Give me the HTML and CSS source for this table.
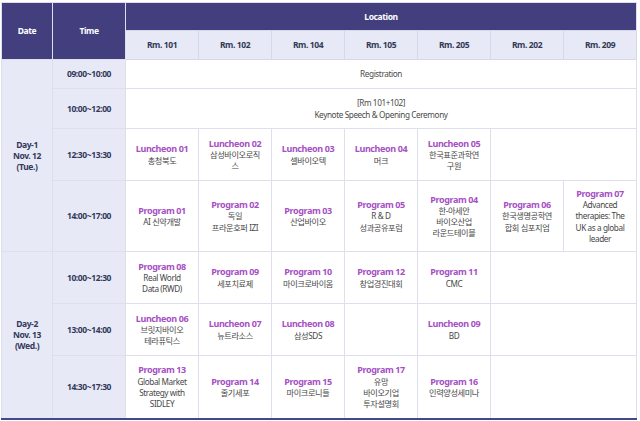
FILE: index.html
```html
<!DOCTYPE html>
<html>
<head>
<meta charset="utf-8">
<link rel="stylesheet" href="styles.css">
</head>
<body>
<table class="sched">
  <colgroup>
    <col class="c-date"><col class="c-time">
    <col class="c-rm"><col class="c-rm"><col class="c-rm"><col class="c-rm"><col class="c-rm"><col class="c-rm"><col class="c-rm">
  </colgroup>
  <thead>
    <tr class="h1">
      <th rowspan="2" class="hd">Date</th>
      <th rowspan="2" class="hd">Time</th>
      <th colspan="7" class="hd loc">Location</th>
    </tr>
    <tr class="h2">
      <th>Rm. 101</th><th>Rm. 102</th><th>Rm. 104</th><th>Rm. 105</th><th>Rm. 205</th><th>Rm. 202</th><th>Rm. 209</th>
    </tr>
  </thead>
  <tbody>
    <tr class="r1">
      <td rowspan="4" class="date">Day-1<br>Nov. 12<br>(Tue.)</td>
      <td class="time">09:00~10:00</td>
      <td colspan="7" class="plain">Registration</td>
    </tr>
    <tr class="r2">
      <td class="time">10:00~12:00</td>
      <td colspan="7" class="plain">[Rm 101+102]<br>Keynote Speech &amp; Opening Ceremony</td>
    </tr>
    <tr class="r3">
      <td class="time">12:30~13:30</td>
      <td><span class="t">Luncheon 01</span><br>총청북도</td>
      <td><span class="t">Luncheon 02</span><br>삼성바이오로직<br>스</td>
      <td><span class="t">Luncheon 03</span><br>셀바이오텍</td>
      <td><span class="t">Luncheon 04</span><br>머크</td>
      <td><span class="t">Luncheon 05</span><br>한국표준과학연<br>구원</td>
      <td colspan="2"></td>
    </tr>
    <tr class="r4">
      <td class="time">14:00~17:00</td>
      <td><span class="t">Program 01</span><br>AI 신약개발</td>
      <td><span class="t">Program 02</span><br>독일<br>프라운호퍼 IZI</td>
      <td><span class="t">Program 03</span><br>산업바이오</td>
      <td><span class="t">Program 05</span><br>R &amp; D<br>성과공유포럼</td>
      <td><span class="t">Program 04</span><br>한-아세안<br>바이오산업<br>라운드테이블</td>
      <td><span class="t">Program 06</span><br>한국생명공학연<br>합회 심포지엄</td>
      <td><span class="t">Program 07</span><br>Advanced<br>therapies: The<br>UK as a global<br>leader</td>
    </tr>
    <tr class="r5">
      <td rowspan="3" class="date">Day-2<br>Nov. 13<br>(Wed.)</td>
      <td class="time">10:00~12:30</td>
      <td><span class="t">Program 08</span><br>Real World<br>Data (RWD)</td>
      <td><span class="t">Program 09</span><br>세포치료제</td>
      <td><span class="t">Program 10</span><br>마이크로바이옴</td>
      <td><span class="t">Program 12</span><br>창업경진대회</td>
      <td><span class="t">Program 11</span><br>CMC</td>
      <td colspan="2"></td>
    </tr>
    <tr class="r6">
      <td class="time">13:00~14:00</td>
      <td><span class="t">Luncheon 06</span><br>브릿지바이오<br>테라퓨틱스</td>
      <td><span class="t">Luncheon 07</span><br>뉴트라소스</td>
      <td><span class="t">Luncheon 08</span><br>삼성SDS</td>
      <td></td>
      <td><span class="t">Luncheon 09</span><br>BD</td>
      <td colspan="2"></td>
    </tr>
    <tr class="r7">
      <td class="time">14:30~17:30</td>
      <td><span class="t">Program 13</span><br>Global Market<br>Strategy with<br>SIDLEY</td>
      <td><span class="t">Program 14</span><br>줄기세포</td>
      <td><span class="t">Program 15</span><br>마이크로니들</td>
      <td><span class="t">Program 17</span><br>유망<br>바이오기업<br>투자설명회</td>
      <td><span class="t">Program 16</span><br>인력양성세미나</td>
      <td colspan="2"></td>
    </tr>
  </tbody>
</table>
</body>
</html>
```
FILE: styles.css
```css
html, body {
  margin: 0;
  padding: 0;
  background: #ffffff;
}
body {
  padding: 2px 0 0 1px;
  font-family: "Noto Sans", "Noto Sans CJK KR", sans-serif;
  font-size: 8.2px;
  color: #474747;
}
.sched {
  border-collapse: collapse;
  table-layout: fixed;
  width: 635px;
  border-bottom: 2px solid #3f4a8c;
}
.c-date { width: 51px; }
.c-time { width: 73px; }
.c-rm { width: 73px; }
.sched th, .sched td {
  padding: 0 2px;
  text-align: center;
  vertical-align: middle;
  line-height: 11.2px;
  letter-spacing: -0.4px;
  border: 1px solid #dde0ec;
}
.h1 { height: 28px; }
.h2 { height: 29px; }
.hd {
  background: #433e7e;
  color: #ffffff;
  font-weight: 700;
  font-size: 8.5px;
  border-color: #c9cde0;
  border-top: none;
}
.sched .loc { border-bottom: none; }
.h2 th {
  background: #e7eaf6;
  color: #333a56;
  font-weight: 700;
  font-size: 8.5px;
  border-color: #d4d8e8;
}
.date, .time {
  background: #e7eaf6;
  color: #33395a;
  font-weight: 700;
  font-size: 8.5px;
}
.date { line-height: 12.6px; border-color: #cdd2e4; }
.time { border-color: #cdd2e4; }
.plain { color: #4a4a4a; }
.t {
  color: #a650c4;
  font-weight: 700;
  font-size: 9px;
}
.r1 { height: 29px; }
.r2 { height: 40px; }
.r3 { height: 52px; }
.r4 { height: 71px; }
.r5 { height: 52px; }
.r6 { height: 52px; }
.r7 { height: 63px; }
```
